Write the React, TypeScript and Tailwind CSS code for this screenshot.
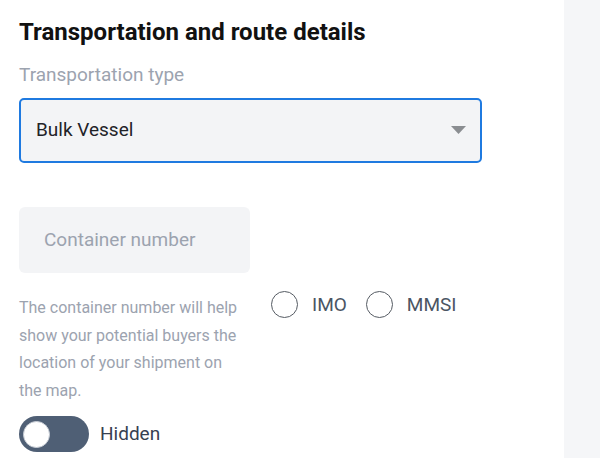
import React, { useState } from "react";

const FONT = { fontFamily: "Roboto, 'Liberation Sans', sans-serif" };

function Radio({ label, checked, onChange }: { label: string; checked: boolean; onChange: () => void }) {
  return (
    <label className="flex cursor-pointer items-center gap-[14px]" onClick={onChange}>
      <span className="flex h-[27px] w-[27px] items-center justify-center rounded-full border-[1.5px] border-[#555b63]">
        {checked && <span className="h-[13px] w-[13px] rounded-full bg-[#1f7ae0]" />}
      </span>
      <span className="text-[19px] leading-[22px] text-[#4b5563]">{label}</span>
    </label>
  );
}

export default function App() {
  const [idType, setIdType] = useState<string | null>(null);
  const [visible, setVisible] = useState(false);

  return (
    <div className="flex h-[458px] w-[600px] overflow-hidden bg-white" style={FONT}>
      <div className="w-[564px] px-[19px] pt-[18px]">
        <h2 className="text-[24px] leading-[28px] font-bold text-[#111111]">
          Transportation and route details
        </h2>
        <p className="mt-[18px] text-[19px] leading-[22px] text-[#9ca3af]">Transportation type</p>

        <div className="relative mt-[12px] flex h-[65px] w-[463px] items-center rounded-[5px] border-2 border-[#1f7ae0] bg-[#f3f4f6] px-[15px]">
          <span className="text-[19px] text-[#1f2328]">Bulk Vessel</span>
          <svg className="absolute right-[14px] top-[26px]" width="15" height="8" viewBox="0 0 15 8">
            <path d="M0 0 H15 L7.5 8 Z" fill="#8a8d91" />
          </svg>
        </div>

        <div className="mt-[44px] flex h-[66px] w-[231px] items-center rounded-[6px] bg-[#f3f4f6] px-[25px]">
          <span className="text-[19px] text-[#9ca3af]">Container number</span>
        </div>

        <div className="mt-[15px] flex items-start gap-[27px]">
          <p className="mt-[6px] w-[225px] text-[16px] leading-[27.5px] text-[#9ca3af]">
            The container number will help show your potential buyers the location of your shipment on the map.
          </p>
          <div className="mt-[3px] flex h-[27px] items-center gap-[19px]">
            <Radio label="IMO" checked={idType === "IMO"} onChange={() => setIdType("IMO")} />
            <Radio label="MMSI" checked={idType === "MMSI"} onChange={() => setIdType("MMSI")} />
          </div>
        </div>

        <div className="mt-[12px] flex items-center gap-[11px]">
          <button
            onClick={() => setVisible(!visible)}
            className={`flex h-[36px] w-[70px] items-center rounded-full bg-[#4f5f75] px-[4px] ${visible ? "justify-end" : "justify-start"}`}
          >
            <span className="h-[27px] w-[27px] rounded-full border border-[#c9ced6] bg-white" />
          </button>
          <span className="text-[19px] text-[#374151]">{visible ? "Visible" : "Hidden"}</span>
        </div>
      </div>
      <div className="flex-1 bg-[#f5f6f8]" />
    </div>
  );
}
